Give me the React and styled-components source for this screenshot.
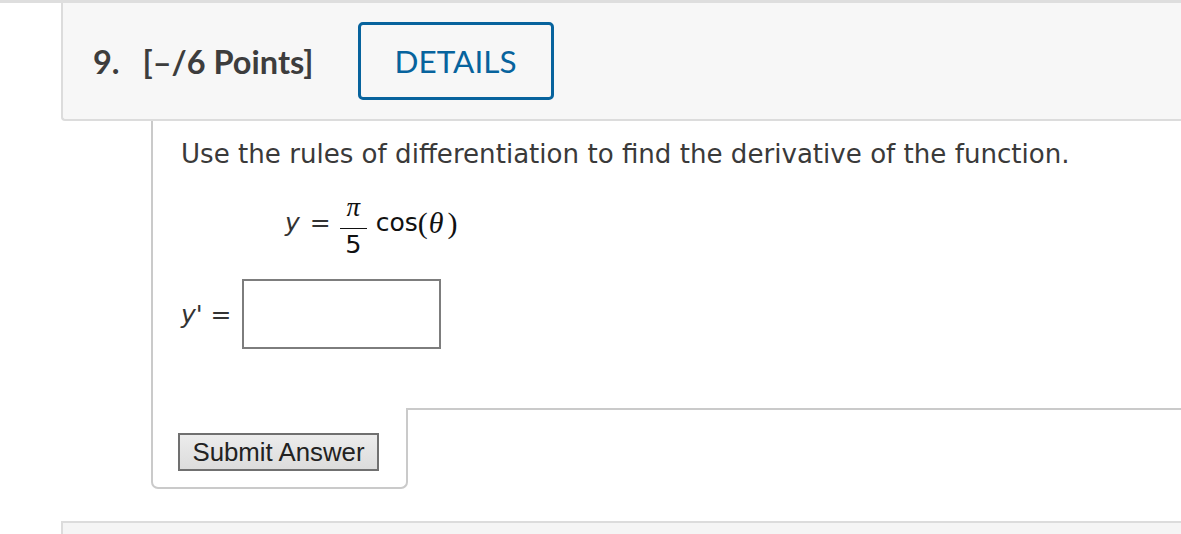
import React from "react";
import styled, { createGlobalStyle } from "styled-components";

const Global = createGlobalStyle`
  html, body { margin: 0; padding: 0; background: #ffffff; }
  body {
    font-family: "DejaVu Sans", Verdana, sans-serif;
    color: #3a3a3a;
    overflow: hidden;
  }
  * { box-sizing: border-box; }
`;

const Page = styled.div`
  width: 1181px;
  height: 534px;
  overflow: hidden;
`;

const TopRule = styled.div`
  height: 3px;
  background: #dedede;
`;

const Question = styled.section`
  margin-left: 61px;
`;

const Header = styled.header`
  height: 118px;
  display: flex;
  align-items: center;
  background: #f7f7f7;
  border-left: 2px solid #dcdcdc;
  border-bottom: 2px solid #dcdcdc;
  border-bottom-left-radius: 4px;
  padding-left: 30px;
`;

const HeadLabel = styled.span`
  font-family: Lato, "Open Sans", sans-serif;
  font-weight: 700;
  font-size: 32.5px;
  color: #3d3d3d;
  margin-right: ${(p) => p.$gap}px;
`;

const DetailsButton = styled.button`
  width: 196px;
  height: 78px;
  border: 3px solid #07639d;
  border-radius: 5px;
  background: transparent;
  color: #07639d;
  font-family: Lato, "Open Sans", sans-serif;
  font-size: 31.5px;
  font-weight: 400;
  padding: 0;
  cursor: pointer;
`;

const Body = styled.div`
  margin-left: 90px;
`;

const Content = styled.div`
  border-left: 2px solid #cacaca;
  padding: 15px 0 59px 28px;
`;

const Prompt = styled.p`
  margin: 0;
  font-size: 26.1px;
  line-height: 36px;
  color: #3a3a3a;
`;

const Formula = styled.div`
  margin: 18px 0 0 104px;
  height: 72px;
  display: flex;
  align-items: center;
  color: #111;
  font-size: 25px;
`;

const MathText = styled.span`
  line-height: 25px;
  margin-bottom: 8px;
  font-family: ${(p) => (p.$serif ? '"Liberation Serif", "Times New Roman", serif' : '"DejaVu Sans", Verdana, sans-serif')};
  font-size: ${(p) => (p.$serif ? "30px" : "25px")};
  font-style: ${(p) => (p.$italic ? "italic" : "normal")};
  margin-left: ${(p) => p.$ml || 0}px;
  margin-right: ${(p) => p.$mr || 0}px;
  color: ${(p) => p.$color || "inherit"};
`;

const Fraction = styled.span`
  display: inline-flex;
  flex-direction: column;
  align-items: center;
`;

const Numerator = styled.span`
  font-family: "Liberation Serif", "Times New Roman", serif;
  font-style: italic;
  font-size: 27px;
  line-height: 25px;
`;

const Denominator = styled.span`
  line-height: 25px;
  font-size: 25.5px;
`;

const Bar = styled.span`
  width: 27px;
  height: 1.5px;
  background: #111;
  margin: 8px 0 3px;
`;

const AnswerRow = styled.div`
  margin-top: 17px;
  display: flex;
  align-items: center;
  height: 70px;
`;

const AnswerLabel = styled.span`
  font-size: 25px;
  line-height: 25px;
  color: #333;
  margin-right: 10px;
  white-space: pre;
`;

const Italic = styled.span`
  font-style: italic;
`;

const AnswerInput = styled.input`
  width: 199px;
  height: 70px;
  border: 2px solid #7d7d7d;
  background: #fff;
  font-size: 22px;
  padding: 0 8px;
  outline: none;
`;

const TabRow = styled.div`
  display: flex;
`;

const SubmitTab = styled.div`
  width: 257px;
  padding: 25px 0 16px 25px;
  border: 2px solid #cacaca;
  border-top: none;
  border-radius: 0 0 7px 7px;
`;

const TabFiller = styled.div`
  flex: 1;
  border-top: 2px solid #cacaca;
`;

const SubmitButton = styled.button`
  width: 201px;
  height: 38px;
  border: 2px solid #707070;
  background: linear-gradient(#ececec, #dcdcdc);
  font-family: "Liberation Sans", Arial, sans-serif;
  font-size: 25.8px;
  color: #222;
  padding: 0;
  display: block;
  cursor: pointer;
`;

const NextPanel = styled.div`
  margin: 32px 0 0 61px;
  height: 40px;
  background: #f5f5f5;
  border-top: 2px solid #dcdcdc;
  border-left: 2px solid #dcdcdc;
`;

export default function App() {
  return (
    <Page>
      <Global />
      <TopRule />
      <Question>
        <Header>
          <HeadLabel $gap={23}>9.</HeadLabel>
          <HeadLabel $gap={44}>[–/6 Points]</HeadLabel>
          <DetailsButton type="button">DETAILS</DetailsButton>
        </Header>
        <Body>
          <Content>
            <Prompt>Use the rules of differentiation to find the derivative of the function.</Prompt>
            <Formula>
              <MathText $italic $color="#333">y</MathText>
              <MathText $ml={10} $mr={9} $color="#333">=</MathText>
              <Fraction>
                <Numerator>π</Numerator>
                <Bar />
                <Denominator>5</Denominator>
              </Fraction>
              <MathText $ml={9}>cos</MathText>
              <MathText $serif>(</MathText>
              <MathText $serif $italic $ml={1} $mr={4}>θ</MathText>
              <MathText $serif>)</MathText>
            </Formula>
            <AnswerRow>
              <AnswerLabel>
                <Italic>y'</Italic>{" ="}
              </AnswerLabel>
              <AnswerInput type="text" aria-label="y prime" />
            </AnswerRow>
          </Content>
          <TabRow>
            <SubmitTab>
              <SubmitButton type="button">Submit Answer</SubmitButton>
            </SubmitTab>
            <TabFiller />
          </TabRow>
        </Body>
      </Question>
      <NextPanel />
    </Page>
  );
}
